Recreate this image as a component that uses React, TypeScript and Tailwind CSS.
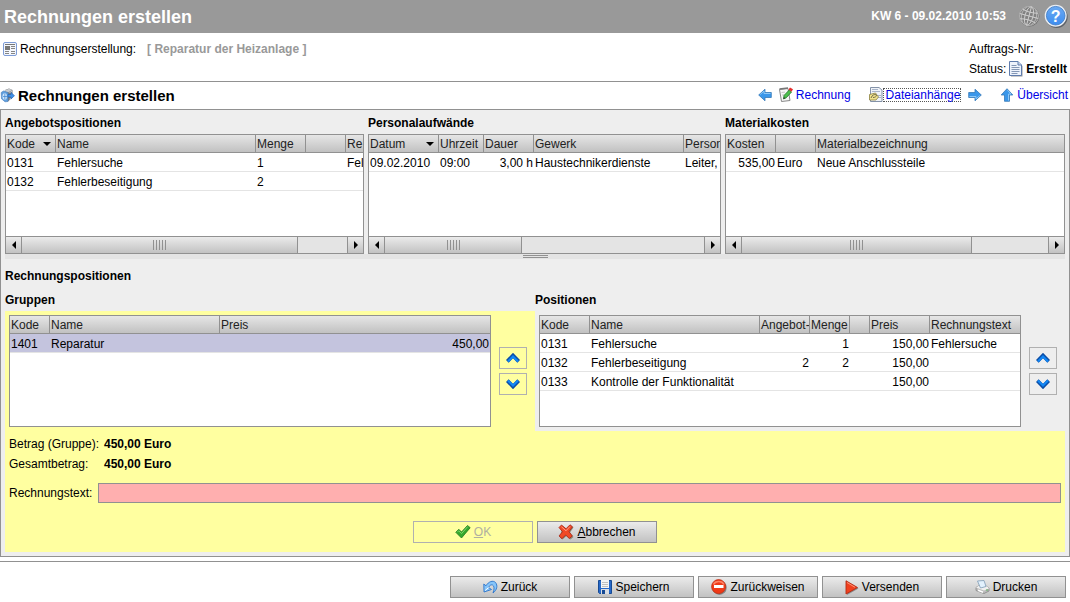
import type { ReactNode } from 'react';

type Column = { label: string; width?: string; right?: boolean; sorted?: boolean };

type GridProps = {
  columns: Column[];
  rows: string[][];
  selected?: number;
  scroll?: number;
};

/* ---------- icons ---------- */

function FormIcon() {
  return (
    <svg width="14" height="14" viewBox="0 0 14 14" aria-hidden="true">
      <rect x="0.5" y="0.5" width="13" height="13" rx="1.5" fill="#f4f7fd" stroke="#7d9bd6" />
      <path d="M2 2.5h10" stroke="#777" />
      <rect x="2" y="4" width="5" height="4" fill="#777" />
      <path d="M8 4.5h4M8 6.5h4M2 9.5h4M8 9.5h4M2 11.5h4M8 11.5h4" stroke="#858585" />
    </svg>
  );
}

function ProcessIcon() {
  return (
    <svg width="15" height="15" viewBox="0 0 15 15" aria-hidden="true">
      <path d="M5 2l4-1.500 3.500 1.500v7.500L8 13.500z" fill="#777b80" />
      <path d="M3.500 3L9 0.800l3.500 1.200L8 4.500z" fill="#c9cccf" />
      <path d="M9.500 4.500l2.500-1M9.500 11l2.500-1.500" stroke="#d5d8db" />
      <path d="M1.200 4.500L3.500 3 8 4.500v9L5 13.800l-3.500-3z" fill="#5f9fdf" stroke="#4379b5" strokeWidth="0.600" />
      <ellipse cx="4.700" cy="8.500" rx="2.200" ry="3.300" fill="#cfe5fb" />
      <path d="M3 8.500h4M4.800 5.500v6" stroke="#4a8bd0" strokeWidth="0.800" />
      <path d="M8 6.500h3V4.500l3.500 3.200L11 11V9H8z" fill="#3f8fe8" stroke="#2463ad" strokeWidth="0.600" />
    </svg>
  );
}

function GlobeIcon() {
  return (
    <svg width="22" height="22" viewBox="0 0 22 22" fill="none" aria-hidden="true">
      <circle cx="11.500" cy="11.500" r="10" fill="#707070" />
      <circle cx="11" cy="11" r="9.500" fill="#828282" stroke="#b0b0b0" />
      <g transform="rotate(15 11 11)" stroke="#cfcfcf" strokeWidth="0.900">
        <ellipse cx="11" cy="11" rx="4" ry="9.500" />
        <path d="M11 1.500v19M1.500 11h19M3 6c5 1.500 11 1.500 16 0M3 16c5-1.500 11-1.500 16 0" />
        <path d="M6.500 3c-4 5-4 11 0 16M15.500 3c4 5 4 11 0 16" strokeWidth="0.600" />
      </g>
    </svg>
  );
}

function HelpIcon() {
  return (
    <svg width="24" height="24" viewBox="0 0 24 24" aria-hidden="true">
      <defs>
        <linearGradient id="help" x1="0" y1="0" x2="0" y2="1">
          <stop offset="0" stopColor="#6aa9f2" />
          <stop offset="1" stopColor="#3d8df0" />
        </linearGradient>
      </defs>
      <circle cx="12.700" cy="13" r="11" fill="#5f6368" />
      <circle cx="11.700" cy="11.700" r="11" fill="#e9eef5" />
      <circle cx="11.700" cy="11.700" r="9.300" fill="url(#help)" stroke="#3a78c4" strokeWidth="0.800" />
      <text x="11.700" y="17.500" textAnchor="middle" fontFamily="Liberation Sans" fontSize="16" fontWeight="700" fill="#fff">
        ?
      </text>
    </svg>
  );
}

function DocumentIcon() {
  return (
    <svg width="14" height="16" viewBox="0 0 14 16" aria-hidden="true">
      <path d="M2 2h8l3.500 3v10.500H2z" fill="#9a9a9a" />
      <path d="M0.500 0.500h8.500l3.500 3.500v10.500h-12z" fill="#eef3fc" stroke="#5f7cad" />
      <path d="M9 0.500V4h3.500" fill="#c9d5ea" stroke="#5f7cad" />
      <path d="M2.500 4.500h5M2.500 6.500h8M2.500 8.500h8M2.500 10.500h8M2.500 12.500h6" stroke="#8497b5" />
    </svg>
  );
}

function ArrowIcon({ turn }: { turn: string }) {
  return (
    <svg width="14" height="14" viewBox="0 0 14 14" className={turn} aria-hidden="true">
      <path d="M0.700 7L7 1.200v3.300h6.300v5H7v3.300z" fill="#3a97ea" stroke="#3579b8" strokeWidth="0.800" strokeLinejoin="round" />
      <path d="M2.200 6.500L6 3v2.500h6.500" fill="none" stroke="#8cc8f8" />
    </svg>
  );
}

function NoteIcon() {
  return (
    <svg width="14" height="15" viewBox="0 0 14 15" aria-hidden="true">
      <path d="M0.500 2.500l8.500-1 2 12-8.500 1z" fill="#f6f6f6" stroke="#888" />
      <path d="M0.500 2l8.500-1" stroke="#777" strokeWidth="1.500" />
      <path d="M2.500 5.500l3.500-0.400M3 8l2.500-0.300" stroke="#c8c8c8" />
      <path d="M4.500 12l0.500-3.500 5.200-5.500 2.300 2-5.200 5.700z" fill="#4cc04c" stroke="#23752a" strokeWidth="0.800" />
      <path d="M9.500 2.500l1.500-2 3 1.700-1.500 2.500z" fill="#e62e2e" />
      <path d="M4.500 12l0.400-2 1.500 1.200z" fill="#333" />
    </svg>
  );
}

function AttachmentIcon() {
  return (
    <svg width="14" height="15" viewBox="0 0 14 15" aria-hidden="true">
      <path d="M1.500 0.500h8.500l3 2.500v11.500H1.500z" fill="#f0f3f8" stroke="#8492a8" />
      <path d="M3 2.500h6M3 4.500h8M9 8.500h3M9 10.500h3" stroke="#a9b5c9" />
      <path d="M0.500 7.500l6-1.500 3 4-2.500 3H0.500z" fill="#f2e48e" stroke="#8a8040" strokeWidth="0.800" />
      <path d="M2 11c1-3 3.500-4 5-3.200s-0.500 2.700-3 2.700" fill="none" stroke="#6f6a45" />
    </svg>
  );
}

function ChevronIcon({ down }: { down?: boolean }) {
  return (
    <svg width="14" height="10" viewBox="0 0 14 10" className={down ? 'rotate-180' : ''} aria-hidden="true">
      <path d="M1.300 8.300L7 2.500l5.700 5.800" fill="none" stroke="#0b4da6" strokeWidth="3.800" />
      <path d="M2 8.500l5-5 5 5" fill="none" stroke="#1287f5" strokeWidth="2.200" />
    </svg>
  );
}

function CheckIcon() {
  return (
    <svg width="16" height="14" viewBox="0 0 16 14" aria-hidden="true">
      <path d="M0.800 7.300l3-3 2.700 2.700L12.500 0.500l2.700 2.200-8.700 10.300z" fill="#36a82c" stroke="#1d7a1d" strokeWidth="0.800" strokeLinejoin="round" />
      <path d="M2.300 7.200l1.400-1.400 2.800 2.800 6.200-7" fill="none" stroke="#7fd86c" />
    </svg>
  );
}

function CrossIcon() {
  return (
    <svg width="16" height="16" viewBox="0 0 16 16" aria-hidden="true">
      <path d="M4.500 2L9 5.500 13 1.500l2.500 2-3.500 5 3.500 4.500-3 2.500-4-3.500L4.500 15.500 2 13.500z" fill="#8a8a7a" />
      <path d="M3.500 1L8 4.800 12 0.800l2.500 2L11 7.700l3.300 4.300-3 2.500L7.700 11 4 14.700 1 12l3.500-4.300L1 3.500z" fill="#f04a26" stroke="#a82514" strokeWidth="0.800" strokeLinejoin="round" />
      <path d="M3.500 2.800L8 6.800l4-4.300" fill="none" stroke="#ff9a82" />
    </svg>
  );
}

function UndoIcon() {
  return (
    <svg width="15" height="14" viewBox="0 0 15 14" aria-hidden="true">
      <path d="M0.800 4l2.200 1.800C5.500 1.500 10 0 12.500 2.500c2.500 3 1.500 7.500-2.500 10.500 1.500-4 1.500-7-0.500-8-1.500-0.600-3 0.500-4 2.500l3 2L1 12z" fill="#86c5fa" stroke="#2c74c9" strokeWidth="0.900" strokeLinejoin="round" />
      <path d="M2.200 10.500l3.500-3" stroke="#fff" />
    </svg>
  );
}

function DiskIcon() {
  return (
    <svg width="14" height="14" viewBox="0 0 14 14" aria-hidden="true">
      <path d="M0.500 0.500h13v13h-12l-1-1z" fill="#2668c9" stroke="#174a94" />
      <rect x="3" y="0" width="8" height="8" fill="#f5f5f5" />
      <path d="M4 2.500h6M4 4.500h6M4 6.500h6" stroke="#c0c0c0" />
      <rect x="3" y="9" width="8" height="5" fill="#d9dde3" />
      <rect x="4" y="10" width="3" height="4" fill="#174a94" />
    </svg>
  );
}

function StopIcon() {
  return (
    <svg width="16" height="16" viewBox="0 0 16 16" aria-hidden="true">
      <circle cx="8.500" cy="8.700" r="7.200" fill="#858585" />
      <circle cx="7.600" cy="7.600" r="7" fill="#ef3a18" stroke="#c22f14" strokeWidth="0.800" />
      <path d="M2.500 5.500c2-4 8.500-4 10.500 0" fill="none" stroke="#ff8264" strokeWidth="1.500" />
      <rect x="3" y="6" width="9.500" height="3" fill="#fff" />
    </svg>
  );
}

function PlayIcon() {
  return (
    <svg width="14" height="15" viewBox="0 0 14 15" aria-hidden="true">
      <path d="M2 2l11.500 6.500L2 15z" fill="#8a8a8a" />
      <path d="M1 0.800l11.500 6.700L1 14z" fill="#f0401e" stroke="#b32a14" strokeWidth="0.900" strokeLinejoin="round" />
      <path d="M2 2.500l8 4.800" stroke="#ff9478" />
    </svg>
  );
}

function PrinterIcon() {
  return (
    <svg width="15" height="14" viewBox="0 0 15 14" aria-hidden="true">
      <path d="M1 7.500l4-2.500 7.500 1.500L14 8.500v2.500L9 13.500 1 10.500z" fill="#bdbdbd" stroke="#858585" strokeWidth="0.800" />
      <path d="M1 7.500L5 5l7.500 1.500L14 8.500 9 10.500z" fill="#f0f0f0" />
      <path d="M2.500 1l6.500-0.500 2 6-5.500 1.500z" fill="#e2f1fd" stroke="#7d9ab5" strokeWidth="0.800" />
      <path d="M3 10.200l5 2" stroke="#fff" strokeWidth="1.500" />
      <circle cx="12" cy="10" r="0.800" fill="#4caf50" />
    </svg>
  );
}

/* ---------- building blocks ---------- */

function ScrollButton({ label, children }: { label: string; children: ReactNode }) {
  return (
    <button aria-label={label} className="flex w-[15px] items-center justify-center bg-linear-to-b from-[#ebebeb] to-[#c2c2c2]">
      {children}
    </button>
  );
}

function Scrollbar({ size }: { size: number }) {
  return (
    <div className="flex h-[17px] border-t border-[#919191] bg-[#e4e4e4]">
      <ScrollButton label="Links">
        <svg width="4" height="8" viewBox="0 0 4 8"><path d="M4 0v8L0 4z" /></svg>
      </ScrollButton>
      <div className="flex grow border-x border-[#919191]">
        <div
          className="flex items-center justify-center gap-0.5 border-r border-[#919191] bg-linear-to-b from-[#ebebeb] to-[#c2c2c2]"
          style={{ width: `${size}%` }}
        >
          {[0, 1, 2, 3, 4].map((i) => (
            <span key={i} className="h-2.5 w-px bg-[#919191]" />
          ))}
        </div>
      </div>
      <ScrollButton label="Rechts">
        <svg width="4" height="8" viewBox="0 0 4 8"><path d="M0 0v8l4-4z" /></svg>
      </ScrollButton>
    </div>
  );
}

function DataGrid({ columns, rows, selected, scroll }: GridProps) {
  return (
    <div className={`flex min-w-0 grow flex-col overflow-hidden border border-[#919191] bg-white ${scroll ? 'h-[120px]' : 'h-28'}`}>
      <table className="w-full table-fixed border-separate border-spacing-0">
        <thead>
          <tr className="bg-linear-to-b from-[#e6e6e6] to-[#bfbfbf] text-[#222]">
            {columns.map((column, i) => (
              <th
                key={i}
                className={`h-[18px] overflow-hidden border-b border-[#919191] p-0 pt-px pl-px text-left leading-4 font-normal whitespace-nowrap ${column.width ?? ''} ${i < columns.length - 1 ? 'border-r' : ''}`}
              >
                {column.sorted ? (
                  <span className="flex items-center justify-between pr-1">
                    {column.label}
                    <svg width="8" height="4" viewBox="0 0 8 4"><path d="M0 0h8L4 4z" /></svg>
                  </span>
                ) : (
                  column.label
                )}
              </th>
            ))}
          </tr>
        </thead>
        <tbody>
          {rows.map((row, i) => (
            <tr key={i} className={selected === i ? 'bg-[#c4c4de]' : ''}>
              {row.map((cell, j) => (
                <td
                  key={j}
                  className={`h-[19px] overflow-hidden border-b border-[#e4e4e4] p-0 pt-0.5 leading-4 whitespace-nowrap ${columns[j].right ? 'pr-px text-right' : 'pl-px'}`}
                >
                  {cell}
                </td>
              ))}
            </tr>
          ))}
        </tbody>
      </table>
      {scroll && (
        <div className="mt-auto">
          <Scrollbar size={scroll} />
        </div>
      )}
    </div>
  );
}

function Section({ title, children }: { title: string; children: ReactNode }) {
  return (
    <section className="flex min-w-0 flex-col">
      <h3 className="flex h-6 items-center pt-0.5 font-bold">{title}</h3>
      {children}
    </section>
  );
}

function MoveButtons() {
  return (
    <div className="flex flex-col gap-1 pt-8">
      <button aria-label="Nach oben" className="flex h-[22px] w-7 items-center justify-center border border-[#b0b0b0]">
        <ChevronIcon />
      </button>
      <button aria-label="Nach unten" className="flex h-[22px] w-7 items-center justify-center border border-[#b0b0b0]">
        <ChevronIcon down />
      </button>
    </div>
  );
}

function ActionButton({ icon, children }: { icon: ReactNode; children: ReactNode }) {
  return (
    <button className="flex h-[22px] w-[120px] items-center justify-center gap-[3px] border border-[#919191] bg-linear-to-b from-[#ebebeb] to-[#c2c2c2]">
      {icon}
      <span>{children}</span>
    </button>
  );
}

/* ---------- page ---------- */

export default function App() {
  return (
    <div className="min-h-screen bg-white font-['Liberation_Sans',Arial,sans-serif] text-xs text-black">
      <header className="flex h-[33px] items-center bg-[#999] pr-0.5 pb-0.5 pl-1 text-white">
        <h1 className="pt-0.5 text-lg font-bold">Rechnungen erstellen</h1>
        <span className="mr-3 ml-auto font-bold">KW 6 - 09.02.2010 10:53</span>
        <button aria-label="Sprache" className="mr-1"><GlobeIcon /></button>
        <button aria-label="Hilfe"><HelpIcon /></button>
      </header>

      <div className="flex h-[49px] justify-between border-b border-[#919191] pt-1.5 pr-[3px] pl-[3px]">
        <div className="flex h-5 items-center gap-[3px]">
          <FormIcon />
          <span>Rechnungserstellung:</span>
          <span className="ml-2 font-bold text-[#999]">[ Reparatur der Heizanlage ]</span>
        </div>
        <div>
          <div className="flex h-5 items-center">Auftrags-Nr:</div>
          <div className="flex h-5 items-center gap-[3px]">
            Status: <DocumentIcon />
            <b>Erstellt</b>
          </div>
        </div>
      </div>

      <div className="flex h-[27px] items-center justify-between">
        <h2 className="flex items-center gap-[3px] text-[15px] font-bold">
          <ProcessIcon />
          Rechnungen erstellen
        </h2>
        <nav className="flex items-center pr-0.5 pb-0.5 text-[#0000e6]">
          <button aria-label="Zurück" className="mr-[7px]"><ArrowIcon turn="" /></button>
          <a href="#rechnung" className="mr-[18px] flex items-center gap-[3px]">
            <NoteIcon />
            Rechnung
          </a>
          <a href="#dateien" className="mr-[7px] flex items-center">
            <AttachmentIcon />
            <span className="border border-dotted border-[#555] pl-0.5 leading-3">Dateianhänge</span>
          </a>
          <button aria-label="Weiter" className="mr-[18px]"><ArrowIcon turn="rotate-180" /></button>
          <a href="#uebersicht" className="flex items-center gap-[3px]">
            <ArrowIcon turn="rotate-90" />
            Übersicht
          </a>
        </nav>
      </div>

      <main className="border border-[#919191] bg-[#eee] px-1 pb-1">
        <div className="grid grid-cols-[359fr_353fr_340fr] gap-1">
          <Section title="Angebotspositionen">
            <DataGrid
              scroll={85}
              columns={[
                { label: 'Kode', width: 'w-[50px]', sorted: true },
                { label: 'Name', width: 'w-[200px]' },
                { label: 'Menge', width: 'w-[50px]' },
                { label: '', width: 'w-10' },
                { label: 'Re' },
              ]}
              rows={[
                ['0131', 'Fehlersuche', '1', '', 'Fel'],
                ['0132', 'Fehlerbeseitigung', '2', '', ''],
              ]}
            />
          </Section>
          <Section title="Personalaufwände">
            <DataGrid
              scroll={43}
              columns={[
                { label: 'Datum', width: 'w-[70px]', sorted: true },
                { label: 'Uhrzeit', width: 'w-[45px]' },
                { label: 'Dauer', width: 'w-[50px]', right: true },
                { label: 'Gewerk', width: 'w-[150px]' },
                { label: 'Person' },
              ]}
              rows={[['09.02.2010', '09:00', '3,00 h', 'Haustechnikerdienste', 'Leiter,']]}
            />
          </Section>
          <Section title="Materialkosten">
            <DataGrid
              scroll={75}
              columns={[
                { label: 'Kosten', width: 'w-[50px]', right: true },
                { label: '', width: 'w-10' },
                { label: 'Materialbezeichnung' },
              ]}
              rows={[['535,00', 'Euro', 'Neue Anschlussteile']]}
            />
          </Section>
        </div>

        <div className="flex h-[5px] items-center justify-center bg-[#e4e4e4]">
          <div className="h-[3px] w-[25px] border-y border-[#919191]" />
        </div>

        <h3 className="flex h-8 items-center pt-0.5 font-bold">Rechnungspositionen</h3>

        <div className="bg-[#ffffa0]">
          <div className="grid grid-cols-2">
            <section>
              <h3 className="h-5 bg-[#eee] pt-px font-bold">Gruppen</h3>
              <div className="flex gap-2 p-1 pr-2">
                <DataGrid
                  selected={0}
                  columns={[
                    { label: 'Kode', width: 'w-10' },
                    { label: 'Name', width: 'w-[170px]' },
                    { label: 'Preis', right: true },
                  ]}
                  rows={[['1401', 'Reparatur', '450,00']]}
                />
                <MoveButtons />
              </div>
            </section>
            <section className="bg-[#eee]">
              <h3 className="h-5 pt-px font-bold">Positionen</h3>
              <div className="flex gap-2 p-1 pr-2">
                <DataGrid
                  columns={[
                    { label: 'Kode', width: 'w-[50px]' },
                    { label: 'Name', width: 'w-[170px]' },
                    { label: 'Angebot-', width: 'w-[50px]', right: true },
                    { label: 'Menge', width: 'w-10', right: true },
                    { label: '', width: 'w-5' },
                    { label: 'Preis', width: 'w-[60px]', right: true },
                    { label: 'Rechnungstext' },
                  ]}
                  rows={[
                    ['0131', 'Fehlersuche', '', '1', '', '150,00', 'Fehlersuche'],
                    ['0132', 'Fehlerbeseitigung', '2', '2', '', '150,00', ''],
                    ['0133', 'Kontrolle der Funktionalität', '', '', '', '150,00', ''],
                  ]}
                />
                <MoveButtons />
              </div>
            </section>
          </div>

          <form className="px-1 pt-[3px] pb-[9px]" onSubmit={(e) => e.preventDefault()}>
            <dl className="grid grid-cols-[95px_1fr] leading-5">
              <dt>Betrag (Gruppe):</dt>
              <dd className="font-bold">450,00 Euro</dd>
              <dt>Gesamtbetrag:</dt>
              <dd className="font-bold">450,00 Euro</dd>
            </dl>
            <div className="mt-[9px] flex items-center">
              <label htmlFor="rechnungstext" className="w-[89px]">Rechnungstext:</label>
              <input id="rechnungstext" className="h-5 min-w-0 grow border border-[#919191] bg-[#ffafaf] px-1" />
            </div>
            <div className="mt-[18px] flex justify-center gap-1">
              <button disabled className="flex h-[22px] w-[120px] items-center justify-center gap-[3px] border border-[#b0b0b0] text-[#b0b0a0]">
                <CheckIcon />
                <span><u>O</u>K</span>
              </button>
              <ActionButton icon={<CrossIcon />}><u>A</u>bbrechen</ActionButton>
            </div>
          </form>
        </div>
      </main>

      <footer className="mt-1 flex justify-end gap-1 border-t border-[#919191] px-1 pt-3.5 pb-1">
        <ActionButton icon={<UndoIcon />}>Zurück</ActionButton>
        <ActionButton icon={<DiskIcon />}>Speichern</ActionButton>
        <ActionButton icon={<StopIcon />}>Zurückweisen</ActionButton>
        <ActionButton icon={<PlayIcon />}>Versenden</ActionButton>
        <ActionButton icon={<PrinterIcon />}>Drucken</ActionButton>
      </footer>
    </div>
  );
}
